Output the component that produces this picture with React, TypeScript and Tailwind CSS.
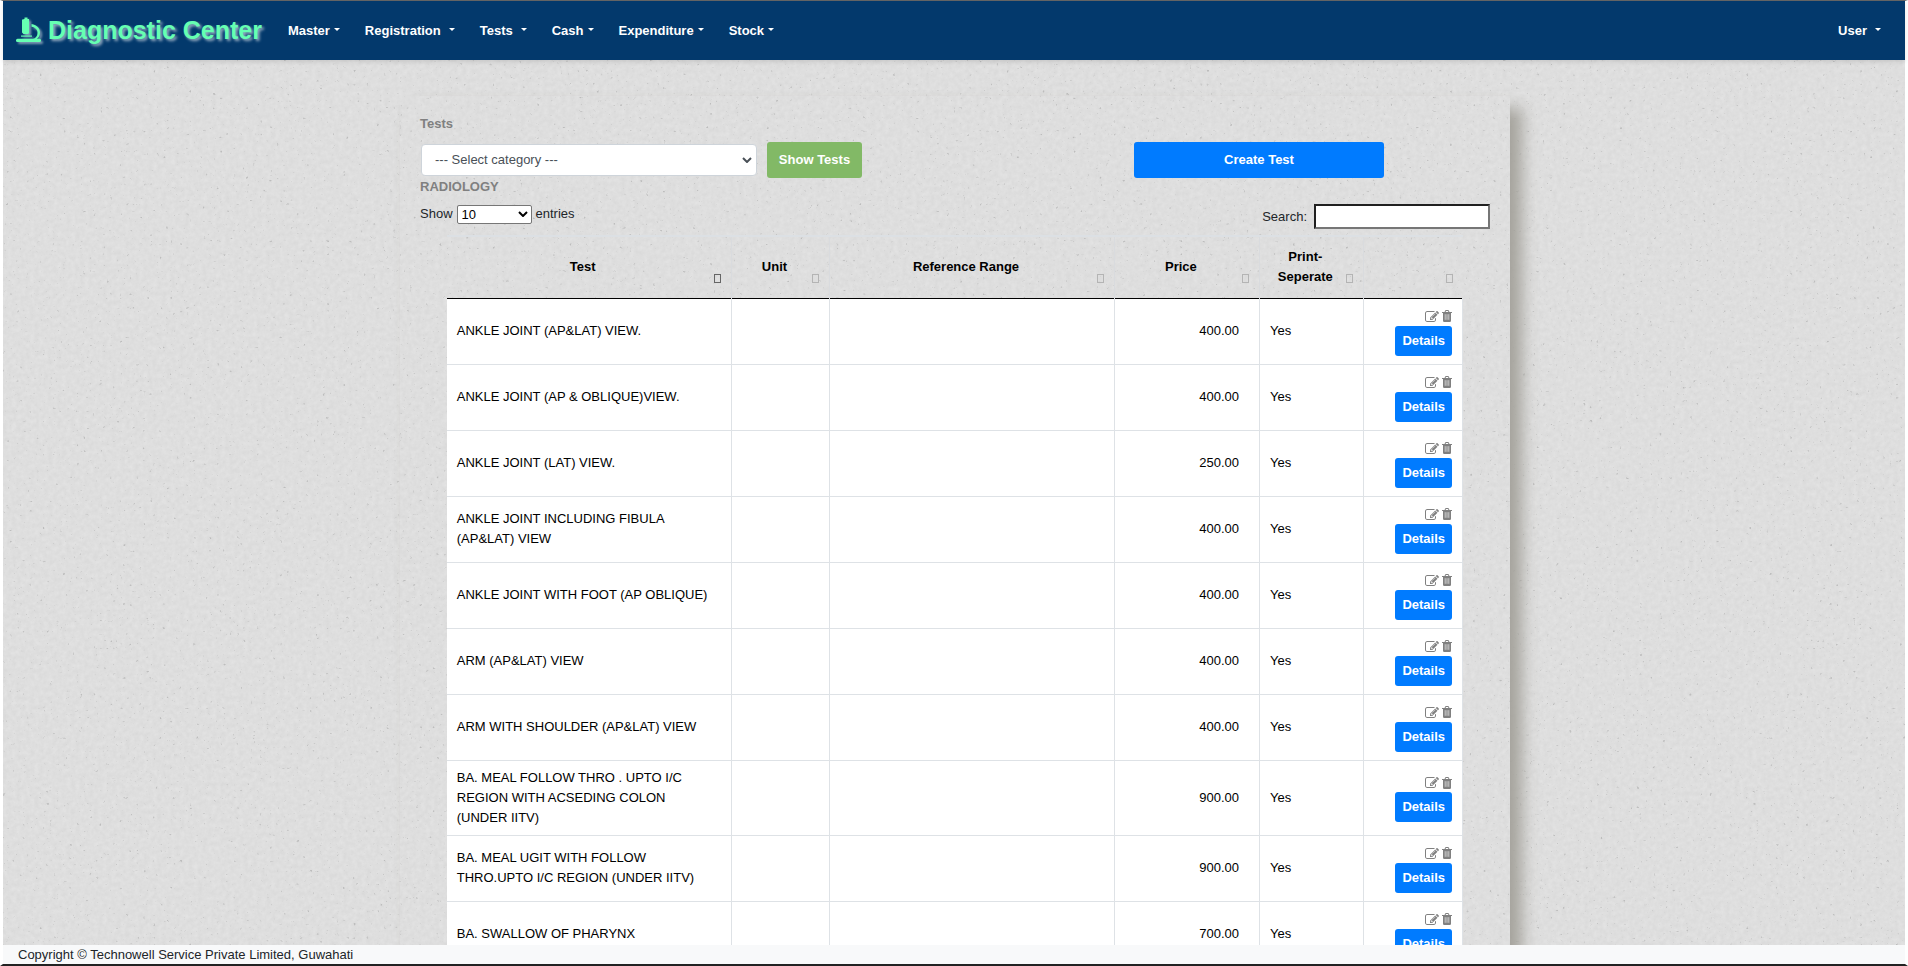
const MENU = [
  { label: "Master", gap: "gap-[4px]" },
  { label: "Registration", gap: "gap-[8px]" },
  { label: "Tests", gap: "gap-[8px]" },
  { label: "Cash", gap: "gap-[4px]" },
  { label: "Expenditure", gap: "gap-[4px]" },
  { label: "Stock", gap: "gap-[4px]" },
];

const COLUMNS = [
  { label: "Test", width: "w-[28%]", active: true },
  { label: "Unit", width: "w-[9.7%]" },
  { label: "Reference Range", width: "w-[28%]" },
  { label: "Price", width: "w-[14.3%]" },
  { label: "Print-Seperate", width: "w-[10.2%]" },
  { label: "", width: "w-[9.8%]" },
];

const ROWS = [
  { name: "ANKLE JOINT (AP&LAT) VIEW.", price: "400.00" },
  { name: "ANKLE JOINT (AP & OBLIQUE)VIEW.", price: "400.00" },
  { name: "ANKLE JOINT (LAT) VIEW.", price: "250.00" },
  { name: "ANKLE JOINT INCLUDING FIBULA (AP&LAT) VIEW", price: "400.00" },
  { name: "ANKLE JOINT WITH FOOT (AP OBLIQUE)", price: "400.00" },
  { name: "ARM (AP&LAT) VIEW", price: "400.00" },
  { name: "ARM WITH SHOULDER (AP&LAT) VIEW", price: "400.00" },
  { name: "BA. MEAL FOLLOW THRO . UPTO I/C REGION WITH ACSEDING COLON (UNDER IITV)", price: "900.00" },
  { name: "BA. MEAL UGIT WITH FOLLOW THRO.UPTO I/C REGION (UNDER IITV)", price: "900.00" },
  { name: "BA. SWALLOW OF PHARYNX", price: "700.00" },
];

function PaperTexture() {
  return (
    <svg className="absolute inset-0 -z-10 h-full w-full" aria-hidden="true">
      <defs>
        <filter id="grain" x="0" y="0" width="100%" height="100%" colorInterpolationFilters="sRGB">
          <feTurbulence type="fractalNoise" baseFrequency="0.22" numOctaves="3" seed="4" />
          <feColorMatrix values="0.05 0 0 0 0.846  0.05 0 0 0 0.846  0.05 0 0 0 0.846  0 0 0 0 1" />
        </filter>
        <filter id="specks" x="0" y="0" width="100%" height="100%" colorInterpolationFilters="sRGB">
          <feTurbulence type="fractalNoise" baseFrequency="0.3" numOctaves="2" seed="11" />
          <feColorMatrix values="0 0 0 0 0.74  0 0 0 0 0.74  0 0 0 0 0.74  6 0 0 0 -4.300" />
        </filter>
      </defs>
      <rect width="100%" height="100%" fill="#dedede" />
      <rect width="100%" height="100%" filter="url(#grain)" />
      <rect width="100%" height="100%" filter="url(#specks)" />
    </svg>
  );
}

function MicroscopeIcon() {
  return (
    <svg viewBox="0 0 25 26" className="h-[26px] w-[25px] overflow-visible drop-shadow-[2px_2px_1px_rgba(255,255,255,0.5)]" fill="#66ffb2" aria-hidden="true">
      <path d="M8.500 0.500h3v1.500h1.500v14l-1 1H7.500l-1.500-1.500V2.500h1.500V2h1z" />
      <rect x="5" y="18.500" width="11" height="1.200" />
      <path d="M15.500 7c6 1 8.500 5 8.500 8.500 0 3-1.300 5.500-3.500 6.800h-4.500c3.500-0.800 5.500-3 5.500-6.300 0-3-2-5.500-6-6.200z" />
      <rect x="0" y="21.800" width="25" height="3.200" rx="1.500" />
    </svg>
  );
}

function Caret() {
  return (
    <svg viewBox="0 0 6 3" className="-mt-[3px] h-[3px] w-[6px] fill-white" aria-hidden="true">
      <path d="M0 0h6L3 3z" />
    </svg>
  );
}

function Chevron({ className }: { className: string }) {
  return (
    <svg viewBox="0 0 10 6" className={className} fill="none" stroke="currentColor" strokeWidth="2" aria-hidden="true">
      <path d="M1 1l4 4 4-4" />
    </svg>
  );
}

function EditIcon() {
  return (
    <svg viewBox="0 128 1792 1408" className="h-[11px] w-[14px] fill-current" aria-hidden="true">
      <path d="M888 1184l116-116-152-152-116 116v56h96v96h56zm440-720q-16-16-33 1l-350 350q-17 17-1 33t33-1l350-350q17-17 1-33zm80 594v190q0 119-84.500 203.500t-203.500 84.500h-832q-119 0-203.500-84.500t-84.500-203.500v-832q0-119 84.500-203.500t203.500-84.500h832q63 0 117 25 15 7 18 23 3 17-9 29l-49 49q-14 14-32 8-23-6-45-6h-832q-66 0-113 47t-47 113v832q0 66 47 113t113 47h832q66 0 113-47t47-113v-126q0-13 9-22l64-64q15-15 35-7t20 29zm-96-738l288 288-672 672h-288v-288zm444 132l-92 92-288-288 92-92q28-28 68-28t68 28l152 152q28 28 28 68t-28 68z" />
    </svg>
  );
}

function TrashIcon() {
  return (
    <svg viewBox="0 0 10 12" className="h-[12px] w-[10px]" aria-hidden="true">
      <path className="fill-current" d="M0 2h2.500L3.200 0.500Q3.400 0 4 0h2q0.600 0 0.800 0.500L7.500 2H10v1H9v7.800Q9 12 7.800 12H2.200Q1 12 1 10.800V3H0zM3.600 2h2.800L6 1H4z" />
      <path className="stroke-white" strokeWidth="0.600" d="M3.200 4.200v5.600M5 4.200v5.600M6.800 4.200v5.600" />
    </svg>
  );
}

export default function App() {
  return (
    <div className="flex h-screen flex-col border-x-3 border-t border-b-2 border-x-white border-t-[#666666] border-b-[#222222] bg-white font-['Liberation_Sans',Arial,sans-serif] text-[13px] leading-[20px] text-[#212529]">
      <header className="relative z-10 flex h-[59px] shrink-0 items-center bg-[#03396c] pr-[24px] pl-[13px] font-bold text-white shadow-[0_2px_4px_rgba(0,0,0,0.1)]">
        <a href="#" className="mr-[26px] flex items-center gap-[7px] pb-[2px] text-[25px] leading-[32px] text-[#66ffb2] [text-shadow:2px_2px_3px_rgba(255,255,255,0.6)]">
          <MicroscopeIcon />
          Diagnostic Center
        </a>
        <nav className="flex flex-1 items-center gap-[25px]">
          {MENU.map((m) => (
            <button key={m.label} type="button" className={`flex items-center ${m.gap}`}>
              {m.label}
              <Caret />
            </button>
          ))}
        </nav>
        <button type="button" className="flex items-center gap-[8px]">
          User
          <Caret />
        </button>
      </header>

      <main className="relative isolate min-h-0 flex-1 overflow-hidden pl-[2px]">
        <PaperTexture />
        <section className="mx-auto mt-[36px] max-w-[1110px] px-[20px] pt-[18px] pb-[20px] shadow-[12px_12px_15px_#a5a39c]">
          <h1 className="font-bold text-[#808080]">Tests</h1>
          <div className="mt-[8px] flex items-start">
            <div className="relative mt-[2px] ml-[1px] w-[336px]">
              <select aria-label="Category" className="block h-[32px] w-full appearance-none rounded-[4px] border border-[#ced4da] bg-white px-[13px] text-[#495057]">
                <option>--- Select category ---</option>
              </select>
              <Chevron className="pointer-events-none absolute top-[13px] right-[5px] h-[6px] w-[10px] text-[#495057]" />
            </div>
            <button type="button" className="ml-[10px] h-[36px] w-[95px] rounded-[3px] bg-[#82b966] font-bold text-white">
              Show Tests
            </button>
            <button type="button" className="mr-[106px] ml-auto h-[36px] w-[250px] rounded-[3px] bg-[#007bff] font-bold text-white">
              Create Test
            </button>
          </div>
          <h2 className="-mt-[1px] font-bold text-[#808080]">RADIOLOGY</h2>
          <div className="mt-[7px] flex items-start justify-between">
            <label className="flex items-center gap-[4px]">
              Show
              <span className="relative">
                <select className="block h-[19px] w-[75px] appearance-none rounded-[2px] border border-[#767676] bg-white px-[4px] leading-[17px] text-black">
                  <option>10</option>
                </select>
                <Chevron className="pointer-events-none absolute top-[6px] right-[4px] h-[6px] w-[10px] text-black" />
              </span>
              entries
            </label>
            <label className="flex items-center gap-[7px]">
              Search:
              <input type="search" className="h-[25px] w-[176px] border-2 border-t-[#202020] border-r-[#767676] border-b-[#767676] border-l-[#202020] bg-white px-[2px]" />
            </label>
          </div>

          <table className="mx-auto mt-[6px] w-[95%] table-fixed border-collapse text-black">
            <thead>
              <tr className="h-[62px] border-t-2 border-b border-t-[#dce0e4] border-b-black">
                {COLUMNS.map((c, i) => (
                  <th key={i} scope="col" className={`relative border-r border-r-[#d9dbde] pr-[22px] pl-[10px] text-center align-middle font-bold last:border-r-0 ${c.width}`}>
                    {c.label}
                    <span className={`absolute right-[10px] bottom-[15px] h-[9px] w-[7px] border ${c.active ? "border-[#666666]" : "border-[#b4b4b4]"}`} />
                  </th>
                ))}
              </tr>
            </thead>
            <tbody>
              {ROWS.map((r) => (
                <tr key={r.name} className="h-[66px] border-b border-b-[#dee2e6] bg-white [&>td]:border-r [&>td]:border-r-[#dee2e6]">
                  <td className="py-[7px] pr-[20px] pl-[10px]">{r.name}</td>
                  <td />
                  <td />
                  <td className="pr-[20px] text-right">{r.price}</td>
                  <td className="px-[10px]">Yes</td>
                  <td className="px-[10px]">
                    <div className="flex flex-col items-end">
                      <div className="flex h-[19px] items-center gap-[3px] text-[#808080]">
                        <button type="button" aria-label="Edit test">
                          <EditIcon />
                        </button>
                        <button type="button" aria-label="Delete test">
                          <TrashIcon />
                        </button>
                      </div>
                      <button type="button" className="h-[30px] w-[57px] rounded-[3px] bg-[#007bff] font-bold text-white">
                        Details
                      </button>
                    </div>
                  </td>
                </tr>
              ))}
            </tbody>
          </table>
        </section>
      </main>

      <footer className="relative z-10 h-[19px] shrink-0 bg-[#f8f9fa] px-[15px] leading-[19px]">
        Copyright © Technowell Service Private Limited, Guwahati
      </footer>
    </div>
  );
}
